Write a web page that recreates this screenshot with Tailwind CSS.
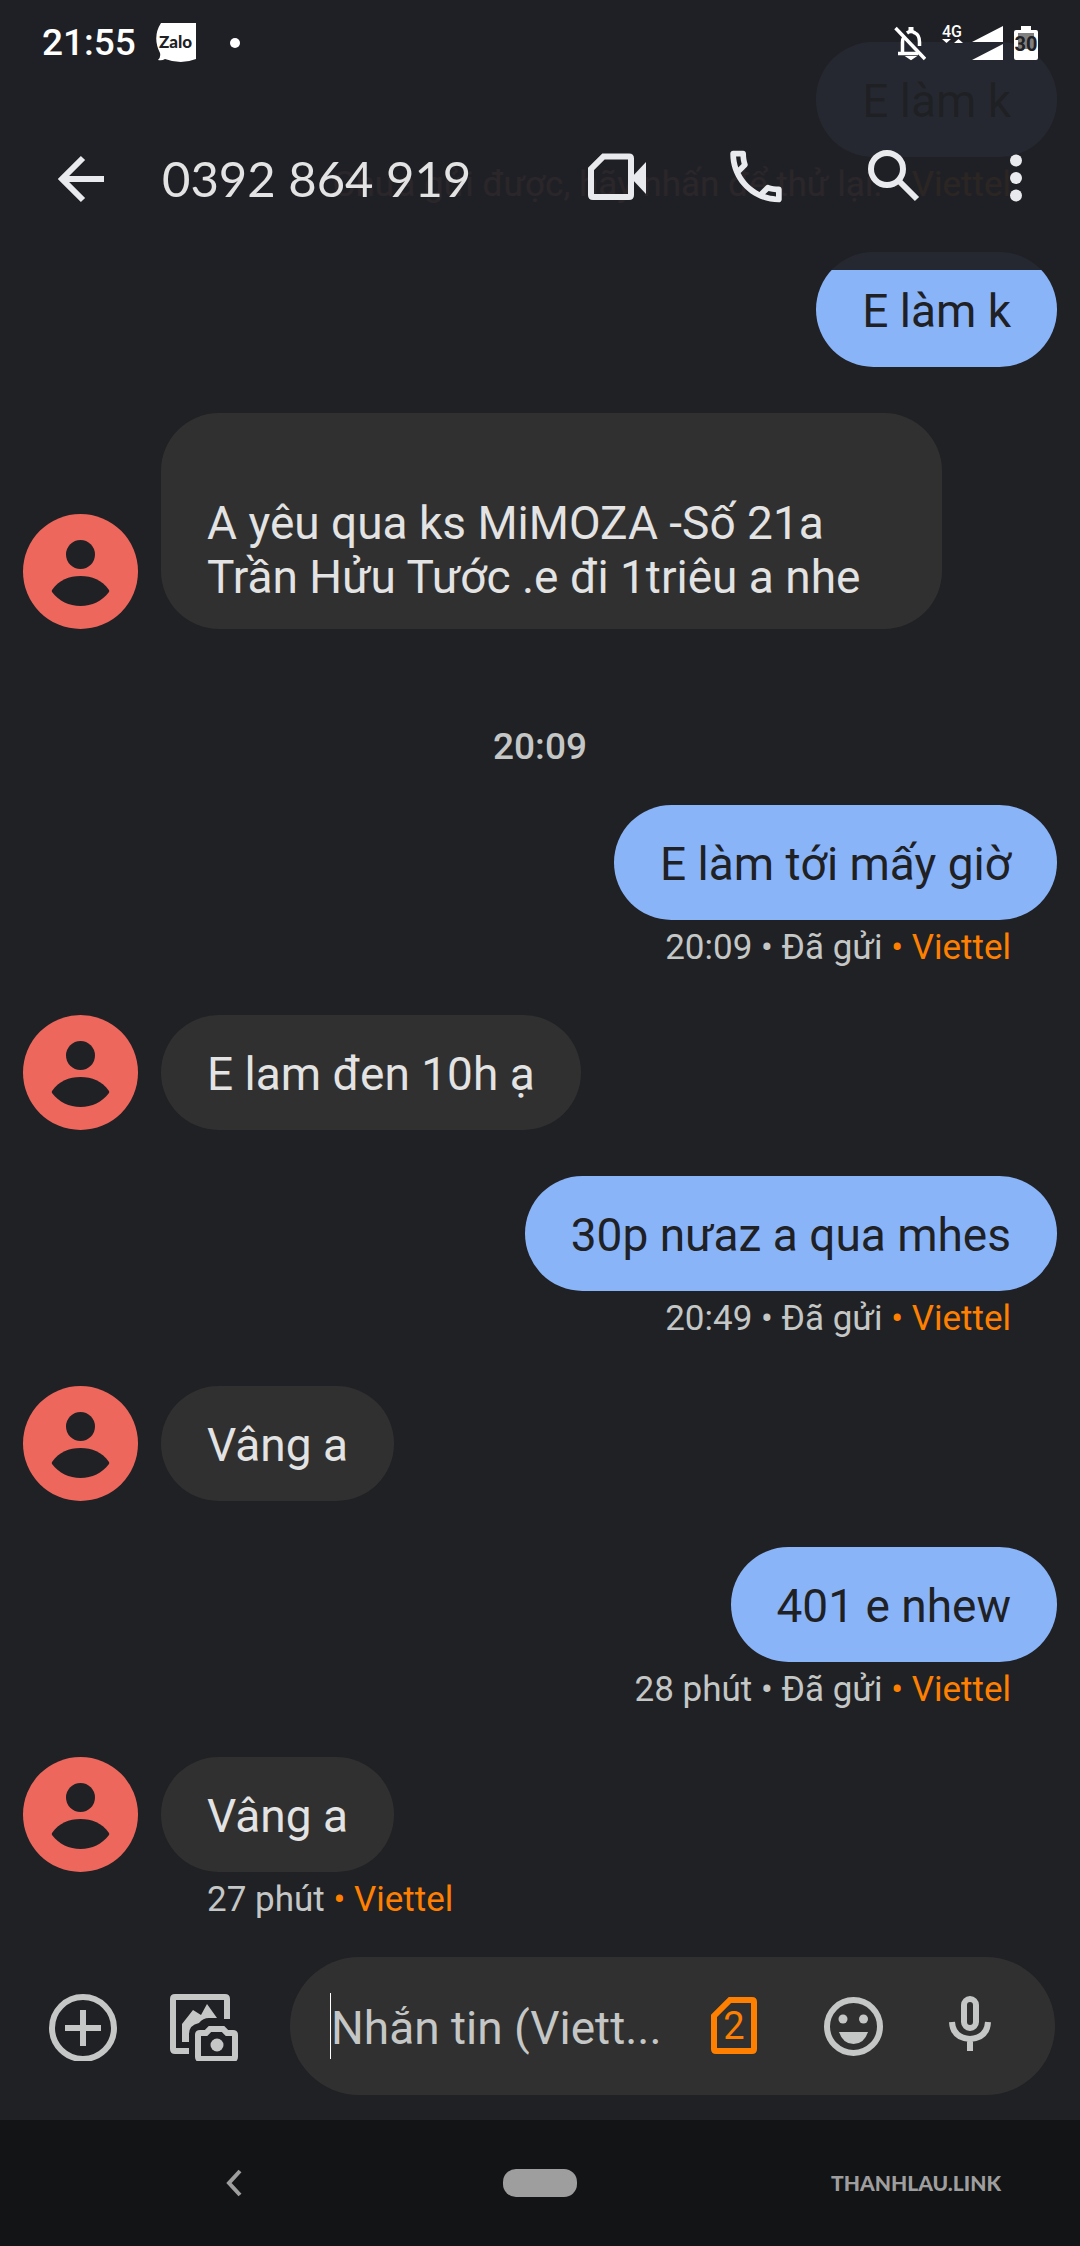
<!DOCTYPE html>
<html lang="vi">
<head>
<meta charset="utf-8">
<meta name="viewport" content="width=device-width, initial-scale=1">
<title>0392 864 919</title>
<script src="https://cdn.jsdelivr.net/npm/@tailwindcss/browser@4"></script>
</head>
<body class="relative flex min-h-screen flex-col overflow-x-hidden bg-[#202125] font-['Roboto','Noto_Sans',sans-serif] text-[#e3e3e3]">

<svg class="hidden">
  <symbol id="avatar" viewBox="0 0 115 115">
    <circle cx="57.500" cy="57.500" r="57.500" fill="#ee675c"/>
    <circle cx="57.500" cy="40.500" r="14.500" fill="#202125"/>
    <path d="M29 76 C36 66 46 62 57.500 62 C69 62 79 66 86 76 Q86.500 77 86 78 C79 87 69 92 57.500 92 C46 92 36 87 29 78 Q28.500 77 29 76Z" fill="#202125"/>
  </symbol>
</svg>

<header class="absolute inset-x-0 top-0 z-10 h-[270px] bg-[#202125]/95">
  <div class="flex h-[86px] items-center pl-[42px] pr-[42px] text-white">
    <time class="text-[37px] leading-[44px] font-medium">21:55</time>
    <svg class="ml-[20px] h-10 w-10" viewBox="0 0 40 40" role="img" aria-label="Zalo">
      <path d="M5 0H40V36Q25 42 9 36Q6 38 2 37Q5 34 4 30Q-4 14 5 0Z" fill="#fff"/>
      <text x="3" y="25" font-family="Lato" font-weight="900" font-size="17" fill="#202125">Zalo</text>
    </svg>
    <span class="ml-[34px] h-[10px] w-[10px] rounded-full bg-white"></span>
    <svg class="ml-auto h-[36px] w-[32px]" viewBox="0 0 32 36" fill="none" stroke="#fff" stroke-width="3.500">
      <path d="M1.500 3L31 34"/><path d="M4 28.500H24M8.500 28V17Q8.500 14 10 12M13 8Q17 5 21 8Q25.500 10 25.500 17V21"/>
      <path d="M17 2V6" stroke-width="5"/><path d="M14 32H20L17 34Z" fill="#fff" stroke-width="2"/>
    </svg>
    <svg class="ml-[16px] h-[36px] w-[22px] overflow-visible" viewBox="0 0 22 36" fill="#fff">
      <text x="0" y="12" font-family="Roboto" font-weight="500" font-size="16">4G</text>
      <path d="M0 14H9L4.500 18ZM12 18H21L16.500 14Z"/>
    </svg>
    <svg class="ml-[8px] h-[36px] w-[31px]" viewBox="0 0 31 36" fill="#fff"><path d="M31 1V17H0ZM31 19V35H0Z"/></svg>
    <svg class="ml-[11px] h-[36px] w-[24px]" viewBox="0 0 24 36">
      <path d="M7 1H17V5H22Q24 5 24 7V33Q24 35 22 35H2Q0 35 0 33V7Q0 5 2 5H7Z" fill="#fff"/><path d="M4 8H20V24H4Z" fill="#808080"/>
      <text x="12" y="26" text-anchor="middle" font-family="Roboto" font-weight="700" font-size="20" fill="#202125">30</text>
    </svg>
  </div>
  <div class="flex h-[184px] items-start pl-[58px] pr-[54px] text-[#e8eaed]">
    <button type="button" aria-label="Quay lại" class="mt-[69px]">
      <svg class="h-[48px] w-[46px]" viewBox="0 0 46 48" fill="none" stroke="currentColor" stroke-width="6"><path d="M25 3L4 24L25 45M4 24H46"/></svg>
    </button>
    <h1 class="ml-[58px] mt-[60px] flex-1 font-['Lato','Roboto',sans-serif] text-[49px] leading-[64px] whitespace-nowrap text-[#e3e3e3]">0392 864 919</h1>
    <div class="mt-[62px] flex shrink-0 items-center">
      <button type="button" aria-label="Gọi video">
        <svg class="h-[60px] w-[58px]" viewBox="0 0 58 60" fill="none" stroke="currentColor" stroke-width="6"><path d="M15.500 8.500H41Q43 8.500 43 10.500V47Q43 49 41 49H5Q3 49 3 47V21Z"/><path d="M43 30L58 14V46Z" fill="currentColor" stroke="none"/></svg>
      </button>
      <button type="button" aria-label="Gọi điện" class="ml-[84px]">
        <svg class="h-[60px] w-[52px]" viewBox="3 2 18 21" fill="currentColor"><path d="M6.540 5c.06.89.21 1.760.45 2.590l-1.200 1.200c-.41-1.200-.67-2.470-.76-3.790h1.510m9.860 12.020c.85.24 1.720.39 2.600.45v1.490c-1.320-.09-2.590-.35-3.800-.75l1.200-1.190M7.500 3H4c-.55 0-1 .45-1 1 0 9.390 7.610 17 17 17 .55 0 1-.45 1-1v-3.490c0-.55-.45-1-1-1-1.240 0-2.450-.2-3.570-.57-.1-.04-.21-.05-.31-.05-.26 0-.51.1-.71.29l-2.200 2.200c-2.830-1.450-5.150-3.760-6.590-6.590l2.200-2.200c.28-.28.36-.67.25-1.020C8.700 6.450 8.500 5.250 8.500 4c0-.55-.45-1-1-1z"/></svg>
      </button>
      <button type="button" aria-label="Tìm kiếm" class="ml-[86px]">
        <svg class="h-[60px] w-[52px]" viewBox="0 0 52 60" fill="none" stroke="currentColor" stroke-width="6"><circle cx="19" cy="21" r="16"/><path d="M31 33L49 51"/></svg>
      </button>
      <button type="button" aria-label="Tùy chọn khác" class="ml-[86px]">
        <svg class="h-[60px] w-[20px]" viewBox="0 0 20 60" fill="currentColor"><circle cx="10" cy="12.500" r="6"/><circle cx="10" cy="30" r="6"/><circle cx="10" cy="47.500" r="6"/></svg>
      </button>
    </div>
  </div>
</header>

<main class="flex flex-1 flex-col px-[23px] pt-[42px] text-[46px] leading-[54px]">
  <section class="flex flex-col items-end">
    <p class="rounded-[58px] bg-[#8ab4f8] px-[46px] pt-[32px] pb-[29px] text-[#202124]">E làm k</p>
    <p class="mt-[6px] h-[89px] pr-[46px] text-[35px] leading-[44px] text-[#f28b82]">Chưa gửi được, hãy nhấn để thử lại. <span class="text-[#ff8000]">• Viettel</span></p>
    <p class="rounded-[58px] bg-[#8ab4f8] px-[46px] pt-[32px] pb-[29px] text-[#202124]">E làm k</p>
  </section>

  <section class="mt-[46px] flex items-end gap-[23px]">
    <svg class="h-[115px] w-[115px] shrink-0"><use href="#avatar"/></svg>
    <p class="w-[781px] rounded-[58px] bg-[#303030] px-[46px] pt-[29px] pb-[25px]"><br>A yêu qua ks MiMOZA -Số 21a<br>Trần Hửu Tước .e đi 1triêu a nhe</p>
  </section>

  <time class="mt-[96px] mb-[36px] text-center text-[37px] leading-[44px] font-medium text-[#c4c7c5]">20:09</time>

  <section class="flex flex-col items-end">
    <p class="rounded-[58px] bg-[#8ab4f8] px-[46px] pt-[32px] pb-[29px] text-[#202124]">E làm tới mấy giờ</p>
    <p class="mt-[6px] h-[89px] pr-[46px] text-[35px] leading-[44px] text-[#c4c7c5]">20:09 • Đã gửi <span class="text-[#ff8000]">• Viettel</span></p>
  </section>

  <section class="flex items-end gap-[23px]">
    <svg class="h-[115px] w-[115px] shrink-0"><use href="#avatar"/></svg>
    <p class="rounded-[58px] bg-[#303030] px-[46px] pt-[32px] pb-[29px]">E lam đen 10h ạ</p>
  </section>

  <section class="mt-[46px] flex flex-col items-end">
    <p class="rounded-[58px] bg-[#8ab4f8] px-[46px] pt-[32px] pb-[29px] text-[#202124]">30p nưaz a qua mhes</p>
    <p class="mt-[6px] h-[89px] pr-[46px] text-[35px] leading-[44px] text-[#c4c7c5]">20:49 • Đã gửi <span class="text-[#ff8000]">• Viettel</span></p>
  </section>

  <section class="flex items-end gap-[23px]">
    <svg class="h-[115px] w-[115px] shrink-0"><use href="#avatar"/></svg>
    <p class="rounded-[58px] bg-[#303030] px-[46px] pt-[32px] pb-[29px]">Vâng a</p>
  </section>

  <section class="mt-[46px] flex flex-col items-end">
    <p class="rounded-[58px] bg-[#8ab4f8] px-[46px] pt-[32px] pb-[29px] text-[#202124]">401 e nhew</p>
    <p class="mt-[6px] h-[89px] pr-[46px] text-[35px] leading-[44px] text-[#c4c7c5]">28 phút • Đã gửi <span class="text-[#ff8000]">• Viettel</span></p>
  </section>

  <section class="flex items-end gap-[23px]">
    <svg class="h-[115px] w-[115px] shrink-0"><use href="#avatar"/></svg>
    <p class="rounded-[58px] bg-[#303030] px-[46px] pt-[32px] pb-[29px]">Vâng a</p>
  </section>
  <p class="mt-[6px] h-[79px] pl-[184px] text-[35px] leading-[44px] text-[#c4c7c5]">27 phút <span class="text-[#ff8000]">• Viettel</span></p>
</main>

<form class="flex items-center pb-[25px] pl-[49px] pr-[25px] text-[#c4c7c5]">
  <button type="button" aria-label="Thêm"><svg class="h-[70px] w-[70px]" viewBox="0 0 70 70" fill="none" stroke="currentColor" stroke-width="6"><circle cx="34" cy="37" r="31"/><path d="M34 19V55M16 37H52"/></svg></button>
  <button type="button" aria-label="Thư viện" class="ml-[51px]"><svg class="h-[70px] w-[68px]" viewBox="0 0 68 70" fill="none" stroke="currentColor" stroke-width="6">
    <path d="M57 28V8Q57 6 55 6H5Q3 6 3 8V58Q3 60 5 60H19"/>
    <path d="M12 51V33L23 19L31 24L37 13L47 27H39Q33 27 29 32Q19 34 19 43V51Z" fill="currentColor" stroke="none"/>
    <path d="M30 42H36L40 38H53L57 42H63Q65 42 65 44V66Q65 68 63 68H30Q28 68 28 66V44Q28 42 30 42Z"/>
    <circle cx="47" cy="54" r="6.500" fill="currentColor" stroke="none"/></svg></button>
  <div class="ml-[52px] flex h-[138px] min-w-0 flex-1 items-center rounded-full bg-[#303030] pl-[40px] pr-[64px]">
    <label for="message" class="sr-only">Tin nhắn</label>
    <input id="message" type="text" placeholder="Nhắn tin (Viett..." class="h-[66px] min-w-0 flex-1 border-l border-white bg-transparent pt-1 text-[46px] text-[#e3e3e3] outline-none placeholder:text-[#c4c7c5]">
    <button type="button" aria-label="SIM 2" class="shrink-0 text-[#ff8000]"><svg class="h-[60px] w-[48px]" viewBox="0 0 48 60" fill="none" stroke="currentColor" stroke-width="6"><path d="M19 4H41Q43 4 43 6V53Q43 55 41 55H5Q3 55 3 53V20Z"/><text x="23" y="43" text-anchor="middle" font-family="Roboto" font-size="38" fill="currentColor" stroke="none">2</text></svg></button>
    <button type="button" aria-label="Biểu tượng cảm xúc" class="ml-[65px] shrink-0"><svg class="h-[60px] w-[60px]" viewBox="0 0 60 60"><circle cx="29.500" cy="30.500" r="26.500" fill="none" stroke="currentColor" stroke-width="6"/><g fill="currentColor"><circle cx="19" cy="23" r="4.500"/><circle cx="39.500" cy="23" r="4.500"/><path d="M15 36H44Q40 48 29.500 48Q19 48 15 36Z"/></g></svg></button>
    <button type="button" aria-label="Ghi âm" class="ml-[65px] shrink-0"><svg class="h-[60px] w-[42px]" viewBox="0 0 42 60" fill="none" stroke="currentColor" stroke-width="6"><rect x="15" y="3" width="12" height="29" rx="6"/><path d="M3 26Q4 42 21 43Q38 42 39 26M21 43V55"/></svg></button>
  </div>
</form>

<nav class="grid h-[126px] grid-cols-3 items-center bg-[#131416] text-[#9e9e9e]">
  <button type="button" aria-label="Trở về" class="flex pl-[226px]"><svg class="h-[28px] w-[16px]" viewBox="0 0 16 28" fill="none" stroke="currentColor" stroke-width="4"><path d="M14 2L3 14L14 26"/></svg></button>
  <button type="button" aria-label="Màn hình chính" class="h-[28px] w-[74px] justify-self-center rounded-[13px] bg-[#9e9e9e]"></button>
  <a href="#" class="justify-self-end pr-[79px] font-['Lato','Roboto',sans-serif] text-[21px] leading-[28px] font-black">THANHLAU.LINK</a>
</nav>
</body>
</html>
